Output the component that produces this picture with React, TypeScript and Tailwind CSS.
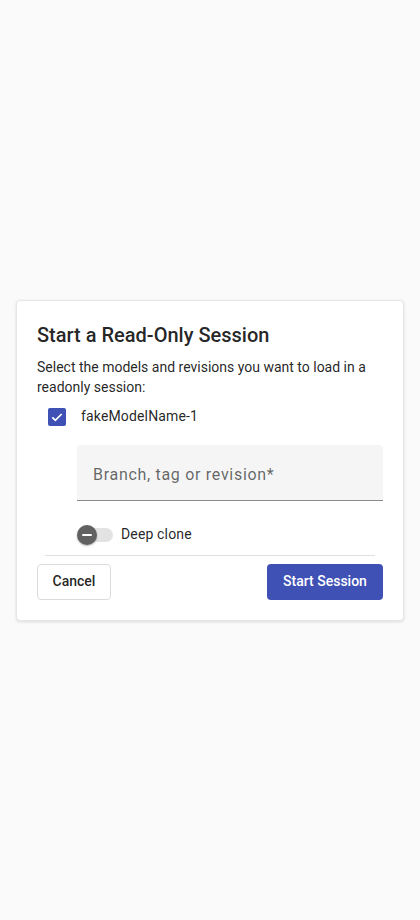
import React from 'react'

export default function App() {
  return (
    <div className="flex min-h-screen items-center justify-center bg-[#fafafa] px-4 font-['Roboto',sans-serif]">
      <div className="w-full rounded border border-[#e6e6e6] bg-white p-5 shadow-[0_1px_3px_rgba(0,0,0,0.12)]">
        {/* Title */}
        <h2 className="text-[20px] font-medium leading-[28px] text-[rgba(0,0,0,0.87)]">
          Start a Read-Only Session
        </h2>
        <p className="mt-2 text-[14px] leading-[20px] text-[rgba(0,0,0,0.87)]">
          Select the models and revisions you want to load in a readonly session:
        </p>

        {/* Model row */}
        <div className="flex h-10 items-center pl-[11px]">
          <span className="flex h-[18px] w-[18px] items-center justify-center rounded-[2px] bg-[#3f51b5]">
            <svg viewBox="0 0 24 24" className="h-[16px] w-[16px]" fill="none">
              <path d="M5 12.5l4.5 4.5L19 7.5" stroke="white" strokeWidth="2.6" />
            </svg>
          </span>
          <span className="ml-[15px] text-[14px] tracking-[0.15px] text-[rgba(0,0,0,0.87)]">fakeModelName-1</span>
        </div>

        {/* Revision field */}
        <div className="ml-10 mt-2 flex h-14 items-center rounded-t border-b border-[#8a8a8a] bg-[#f5f5f5] px-4 pt-[5px]">
          <span className="text-[16px] tracking-[0.7px] text-[rgba(0,0,0,0.6)]">Branch, tag or revision*</span>
        </div>

        {/* Deep clone switch */}
        <div className="ml-10 mt-[14px] flex h-10 items-center">
          <span className="relative flex h-5 w-9 items-center">
            <span className="absolute left-[2px] right-0 h-[14px] rounded-full bg-[#e3e3e3]" />
            <span className="relative flex h-5 w-5 items-center justify-center rounded-full bg-[#616161] shadow-[0_1px_2px_rgba(0,0,0,0.3)]">
              <span className="h-[2px] w-[10px] rounded bg-white" />
            </span>
          </span>
          <span className="ml-[8px] text-[14px] tracking-[0.15px] text-[rgba(0,0,0,0.87)]">Deep clone</span>
        </div>

        <div className="mx-2 h-px bg-[#e0e0e0]" />

        {/* Actions */}
        <div className="mt-2 flex items-center justify-between">
          <button className="h-9 w-[74px] rounded border border-[#dcdcdc] text-[14px] font-medium text-[rgba(0,0,0,0.87)]">
            Cancel
          </button>
          <button className="h-9 w-[116px] rounded bg-[#3f51b5] text-[14px] font-medium text-white">
            Start Session
          </button>
        </div>
      </div>
    </div>
  )
}
